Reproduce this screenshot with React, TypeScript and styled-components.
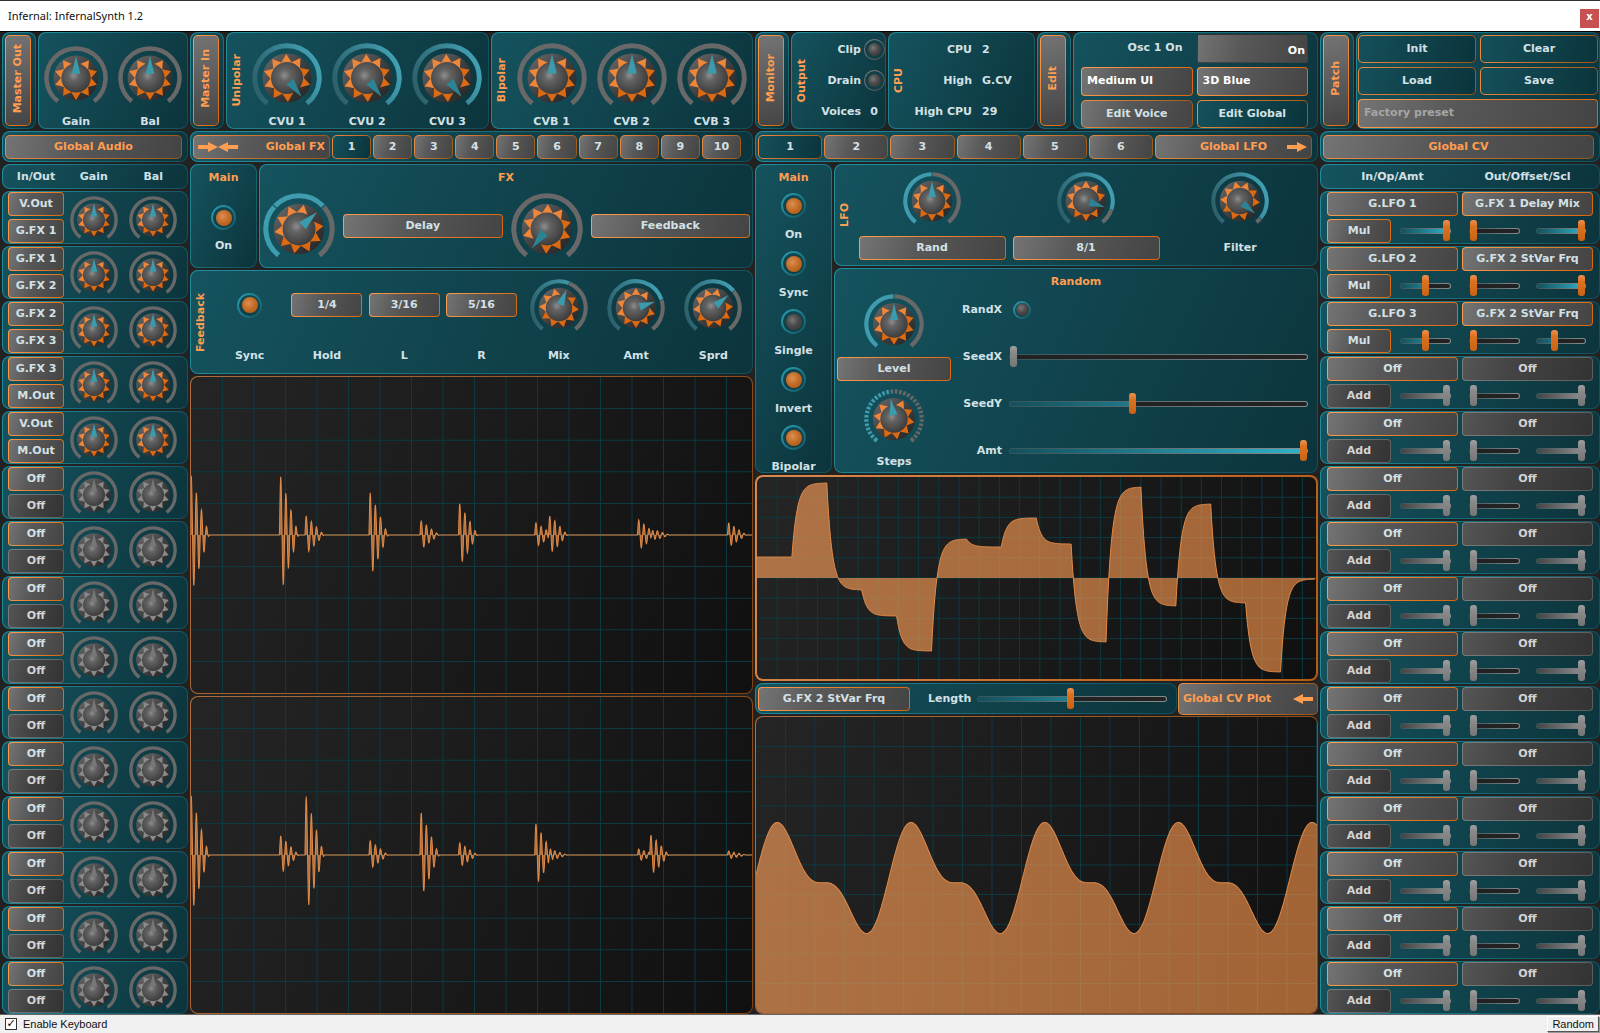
import React from "react";
import styled, { createGlobalStyle, css } from "styled-components";

const ORANGE = "#ff9d50";
const TEXT = "#d3e1e6";

const Global = createGlobalStyle`
  * { box-sizing: border-box; }
  body { margin: 0; background: #222; }
  button, select, input { font: inherit; color: inherit; margin: 0; }
  button, select { cursor: pointer; }
`;

/* Surfaces: the fill and the gradient outline are both painted as backgrounds */

const outlined = (fill: string, line: string, width = 1) => css`
  border: ${width}px solid transparent;
  background: ${fill} padding-box, ${line} border-box;
`;

const TEAL_FILL = "linear-gradient(115deg, #15535e, #0c343c)";
const TEAL_LINE = "linear-gradient(115deg, #1f8fa0, #114f5a)";
const GREY_FILL = "linear-gradient(105deg, #747474, #585858 40%, #444)";
const DIM_FILL = "linear-gradient(105deg, #555, #434343 40%, #333)";
const TAB_ON_FILL = "linear-gradient(105deg, #15505a, #0b343c)";
const ORANGE_LINE = "linear-gradient(115deg, #ff9c50, #d9660c)";
const TAB_LINE = "linear-gradient(115deg, #f08c40, #985416)";
const GREY_LINE = "linear-gradient(115deg, #7c7c7c, #5c5c5c)";

const App$ = styled.div`
  min-height: 100vh;
  display: flex;
  flex-direction: column;
  background: #222;
  color: ${TEXT};
  font: bold 11px/14px "DejaVu Sans", Verdana, sans-serif;
`;

const TitleBar = styled.header`
  height: 32px;
  flex: none;
  display: flex;
  align-items: center;
  justify-content: space-between;
  padding: 0 1px 0 8px;
  background: #fff;
  color: #111;
  border-top: 1px solid #333;
  border-bottom: 1px solid #000;
  font: 11px/16px "Noto Sans", "Open Sans", sans-serif;
`;

const TitleText = styled.h1`
  margin: 0;
  font: inherit;
`;

const CloseButton = styled.button`
  width: 19px;
  height: 19px;
  margin-top: 4px;
  padding: 0 0 2px;
  border: 0;
  background: #c75050;
  color: #fff;
  font: bold 10px/16px "DejaVu Sans", sans-serif;
`;

const Rack = styled.main`
  flex: 1;
  display: grid;
  grid-template-columns: minmax(0, 186fr) minmax(0, 563fr) minmax(0, 563fr) minmax(0, 280fr);
  gap: 2px;
  padding-left: 2px;
`;

const Column = styled.div`
  display: flex;
  flex-direction: column;
  gap: 2px;
`;

const Footer = styled.footer`
  height: 19px;
  flex: none;
  display: flex;
  align-items: center;
  justify-content: space-between;
  padding: 0 1px 0 5px;
  border-top: 1px solid #666;
  background: #f0f0f0;
  color: #111;
  font: 11px/14px "Liberation Sans", Arial, sans-serif;
`;

const KeyboardLabel = styled.label`
  display: flex;
  align-items: center;
  gap: 6px;
`;

const KeyboardBox = styled.input`
  appearance: none;
  width: 12px;
  height: 12px;
  border: 1px solid #333;
  background: #fff;
  display: grid;
  place-items: center;
  &:checked::after {
    content: "✓";
    color: #000;
    font: bold 11px/10px "DejaVu Sans", sans-serif;
  }
`;

const ClassicButton = styled.button`
  height: 16px;
  padding: 0 4px;
  border: 1px solid;
  border-color: #fff #555 #555 #fff;
  box-shadow: 1px 1px 0 #999;
  background: #f0f0f0;
  line-height: 13px;
`;

const Panel = styled.section<{ $dir?: "row" | "column"; $grow?: number; $width?: number; $height?: number }>`
  display: flex;
  flex-direction: ${(p) => p.$dir ?? "column"};
  ${(p) => p.$grow && `flex: ${p.$grow} 1 0;`}
  ${(p) => p.$width && `flex: none; width: ${p.$width}px;`}
  ${(p) => p.$height && `height: ${p.$height}px;`}
  min-width: 0;
  border-radius: 8px;
  ${outlined(TEAL_FILL, TEAL_LINE)}
`;

const TopRow = styled.div`
  display: flex;
  gap: 2px;
  height: 97px;
`;

const Split = styled.div<{ $height: number }>`
  display: flex;
  gap: 2px;
  height: ${(p) => p.$height}px;
`;

const Stack = styled.div`
  flex: 1;
  min-width: 0;
  display: flex;
  flex-direction: column;
  gap: 2px;
`;

const BarPanel = styled(Panel)`
  flex-direction: row;
  align-items: center;
  gap: 2px;
  height: 31px;
  padding: 0 5px 0 2px;
`;

const FxBar = styled(BarPanel)`
  padding-right: 11px;
`;

const SideFrame = styled(Panel)`
  flex: none;
  width: 34px;
  padding: 2px 4px 2px 2px;
`;

const SideButton = styled.button`
  flex: 1;
  width: 100%;
  padding: 0;
  border-radius: 5px;
  color: ${ORANGE};
  ${outlined("linear-gradient(165deg, #747474, #444)", ORANGE_LINE)}
`;

const Upright = styled.span`
  display: inline-block;
  writing-mode: vertical-rl;
  transform: rotate(180deg);
  white-space: nowrap;
`;

const UprightTitle = styled.h2`
  flex: none;
  width: 20px;
  margin: 0;
  display: grid;
  place-items: center;
  color: ${ORANGE};
  font: inherit;
`;

const Title = styled.h2`
  margin: 0;
  padding-top: 6px;
  text-align: center;
  color: ${ORANGE};
  font: inherit;
`;

type Tone = "on" | "dim";

const control = css<{ $tone?: Tone; $w?: number }>`
  height: 24px;
  padding: 0;
  border-radius: 4px;
  white-space: nowrap;
  ${(p) => (p.$w ? `width: ${p.$w}px;` : "width: 100%;")}
  ${(p) =>
    p.$tone === "dim" ? outlined(DIM_FILL, GREY_LINE) : outlined(GREY_FILL, ORANGE_LINE)}
  ${(p) => p.$tone === "dim" && "color: #d4d4d4;"}
`;

const Select$ = styled.select<{ $tone?: Tone; $w?: number }>`
  appearance: none;
  min-width: 0;
  text-align: center;
  text-align-last: center;
  ${control}
`;

const EditSelect = styled(Select$)`
  height: 29px;
  padding: 0 5px;
  color: #fff;
  text-align: left;
  text-align-last: left;
`;

const PresetSelect = styled(EditSelect)`
  grid-column: 1 / -1;
  color: #a6a6a6;
`;

const EditField = styled.input`
  width: 100%;
  min-width: 0;
  height: 29px;
  padding: 4px 2px 0;
  color: #fff;
  text-align: right;
  border-radius: 2px;
  ${outlined(GREY_FILL, "linear-gradient(#333, #444)")}
`;

const Tab = styled.button<{ $active?: boolean }>`
  flex: 1;
  min-width: 0;
  height: 24px;
  padding: 0;
  border-radius: 5px;
  ${(p) => outlined(p.$active ? TAB_ON_FILL : GREY_FILL, TAB_LINE)}
`;

const SectionButton = styled.button<{ $w?: number }>`
  ${(p) => (p.$w ? `flex: none; width: ${p.$w}px;` : "flex: 1;")}
  height: 24px;
  display: flex;
  align-items: center;
  justify-content: ${(p) => (p.$w ? "space-between" : "center")};
  padding: 0 4px;
  border-radius: 5px;
  color: ${ORANGE};
  white-space: nowrap;
  ${outlined(GREY_FILL, TAB_LINE)}
`;

const LfoButton = styled(SectionButton)`
  justify-content: flex-end;
  gap: 20px;
`;

const PlotButton = styled(SectionButton)`
  height: 32px;
`;

const ActionButton = styled.button<{ $grey?: boolean }>`
  width: 100%;
  min-width: 0;
  height: 28px;
  padding: 0;
  border-radius: 5px;
  ${(p) => outlined(p.$grey ? GREY_FILL : TAB_ON_FILL, TAB_LINE)}
`;

const ActionGrid = styled.div<{ $pad: string }>`
  flex: 1;
  display: grid;
  grid-template-columns: 1fr 1fr;
  gap: 4px;
  align-content: center;
  align-items: center;
  padding: ${(p) => p.$pad};
`;

const RightLabel = styled.label`
  padding-right: 10px;
  text-align: right;
  white-space: nowrap;
`;

/* Knobs */

const KnobBox = styled.span<{ $size: number }>`
  position: relative;
  display: block;
  flex: none;
  width: ${(p) => p.$size}px;
  svg { display: block; width: 100%; }
  input {
    position: absolute;
    inset: 0;
    width: 100%;
    height: 100%;
    opacity: 0;
  }
`;

const RING_END = 142;
const polar = (r: number, deg: number) => {
  const a = (deg * Math.PI) / 180;
  return `${(r * Math.sin(a)).toFixed(2)} ${(-r * Math.cos(a)).toFixed(2)}`;
};
const arc = (from: number, to: number) =>
  `M${polar(29.5, from)} A29.5 29.5 0 ${to - from > 180 ? 1 : 0} 1 ${polar(29.5, to)}`;

const TEETH = [36, 72, 108, 144, 180, 216, 252, 288, 324];

type KnobProps = {
  size: number;
  angle?: number;
  fill?: boolean;
  parts?: number;
  off?: boolean;
  name: string;
};

function Knob({ size, angle = 0, fill, parts, off, name }: KnobProps) {
  const ring: { d: string; stroke: string }[] = [];
  if (parts) {
    const step = (RING_END * 2) / parts;
    const gap = parts > 4 ? step * 0.2 : 1;
    for (let i = 0; i < parts; i++) {
      const from = -RING_END + i * step;
      ring.push({
        d: arc(from + (i ? gap : 0), from + step - (i < parts - 1 ? gap : 0)),
        stroke: from + step <= angle + 1 ? "#3f9cae" : "#686868",
      });
    }
  } else if (fill) {
    ring.push({ d: arc(-RING_END, angle), stroke: "url(#ringFill)" });
    if (angle < RING_END) ring.push({ d: arc(angle + 1, RING_END), stroke: "#686868" });
  } else {
    ring.push({ d: arc(-RING_END, RING_END), stroke: "#686868" });
  }
  const turn = `rotate(${angle})`;
  return (
    <KnobBox $size={size}>
      <svg viewBox="-32 -32 64 58" aria-hidden="true">
        {ring.map((s, i) => (
          <path key={i} d={s.d} fill="none" stroke={s.stroke} strokeWidth="4.5" />
        ))}
        <circle r="22.4" fill="url(#knobRim)" />
        <g transform={turn}>
          {TEETH.map((t) => (
            <path
              key={t}
              transform={`rotate(${t})`}
              d="M0 -22 L5 -13.8 L-5 -13.8 Z"
              fill={off ? "#8a8a8a" : Math.cos(((t + angle + 40) * Math.PI) / 180) > 0.2 ? "#ee873a" : "#dc6a12"}
            />
          ))}
        </g>
        <circle r="14.6" fill="url(#knobCap)" />
        <path
          transform={turn}
          d="M0 -22 L4.3 -4.2 L-4.3 -4.2 Z"
          fill={off ? "#777" : Math.abs(angle) < 100 ? "#3a9bad" : "#2b8394"}
        />
      </svg>
      <input type="range" min={-RING_END} max={RING_END} defaultValue={angle} disabled={off} aria-label={name} />
    </KnobBox>
  );
}

const SharedPaints = styled.svg`
  position: absolute;
  width: 0;
  height: 0;
`;

function Paints() {
  return (
    <SharedPaints aria-hidden="true">
      <defs>
        <linearGradient id="ringFill" gradientUnits="userSpaceOnUse" x1="-30" y1="20" x2="30" y2="-4">
          <stop offset="0" stopColor="#2c5c66" />
          <stop offset="0.5" stopColor="#357c8a" />
          <stop offset="1" stopColor="#419eb1" />
        </linearGradient>
        <linearGradient id="knobRim" x1="0" y1="0" x2="1" y2="1">
          <stop offset="0" stopColor="#6c6c6c" />
          <stop offset="0.5" stopColor="#404040" />
          <stop offset="1" stopColor="#222" />
        </linearGradient>
        <radialGradient id="knobCap" cx="0.42" cy="0.42" r="0.6">
          <stop offset="0" stopColor="#8e8e8e" />
          <stop offset="0.3" stopColor="#636363" />
          <stop offset="1" stopColor="#3c3c3c" />
        </radialGradient>
        <linearGradient id="wave" x1="0" y1="0" x2="1" y2="0">
          <stop offset="0" stopColor="#f79c58" />
          <stop offset="1" stopColor="#f09048" />
        </linearGradient>
      </defs>
    </SharedPaints>
  );
}

/* Toggle lamps */

const Led = styled.input<{ $size?: number; $grey?: boolean }>`
  appearance: none;
  flex: none;
  display: grid;
  place-items: center;
  width: ${(p) => p.$size ?? 25}px;
  height: ${(p) => p.$size ?? 25}px;
  border-radius: 50%;
  ${(p) =>
    p.$grey
      ? outlined("linear-gradient(#113f48, #113f48)", "linear-gradient(135deg, #868686, #4c4c4c)", 1)
      : outlined("linear-gradient(#114650, #113f48)", "linear-gradient(135deg, #28a2b6, #14535e)", 2)}
  &::before {
    content: "";
    width: ${(p) => (p.$size ? 13 : 16)}px;
    height: ${(p) => (p.$size ? 13 : 16)}px;
    border-radius: 50%;
    background: radial-gradient(circle at 40% 38%, #787878, #484848 45%, #343434);
  }
  &:checked::before {
    background: radial-gradient(circle at 40% 38%, #dc8e52, #c06a24 50%, #a65310);
  }
`;

/* Sliders */

const SliderInput = styled.input<{ $off?: boolean; $fill: number }>`
  appearance: none;
  flex: 1;
  min-width: 0;
  height: 21px;
  background: transparent;
  &::-webkit-slider-runnable-track {
    height: 6px;
    border-radius: 3px;
    border: 1px solid transparent;
    background:
      linear-gradient(90deg, transparent ${(p) => p.$fill}%, #222 ${(p) => p.$fill}%) padding-box,
      linear-gradient(90deg, ${(p) => (p.$off ? "#444, #929292" : "#14505b, #2fb3cb")}) padding-box,
      linear-gradient(90deg, #35555c, #8c8c8c) border-box;
  }
  &::-webkit-slider-thumb {
    appearance: none;
    width: 7px;
    height: 21px;
    margin-top: -9px;
    border-radius: 3px;
    background: ${(p) =>
      p.$off ? "linear-gradient(#a0a0a0, #8a8a8a 30%, #767676)" : "linear-gradient(#ec9250, #dc7220 30%, #c86212)"};
  }
`;

function Slider({ value, off, name, id }: { value: number; off?: boolean; name?: string; id?: string }) {
  return (
    <SliderInput
      id={id}
      type="range"
      min={0}
      max={100}
      defaultValue={value}
      $fill={value}
      $off={off}
      aria-label={name}
    />
  );
}

function Choice({ value, name, tone, w }: { value: string; name?: string; tone?: Tone; w?: number }) {
  return (
    <Select$ $tone={tone} $w={w} aria-label={name} defaultValue={value}>
      <option>{value}</option>
    </Select$>
  );
}

function Side({ children }: { children: string }) {
  return (
    <SideFrame>
      <SideButton type="button">
        <Upright>{children}</Upright>
      </SideButton>
    </SideFrame>
  );
}

function VTitle({ children }: { children: string }) {
  return (
    <UprightTitle>
      <Upright>{children}</Upright>
    </UprightTitle>
  );
}

function Arrow({ left }: { left?: boolean }) {
  return (
    <svg width="20" height="12" viewBox="0 0 20 12" aria-hidden="true">
      <path
        transform={left ? "matrix(-1 0 0 1 20 0)" : undefined}
        d="M0 4 H10 V1 L20 6 L10 11 V8 H0 Z"
        fill={ORANGE}
      />
    </svg>
  );
}

const ArrowPair = styled.span`
  display: flex;
`;

/* Knob and control cells, each with its caption below */

const Cells = styled.div<{ $n: number }>`
  flex: 1;
  min-width: 0;
  display: grid;
  grid-template-columns: repeat(${(p) => p.$n}, minmax(0, 1fr));
`;

const TopCell = styled.label`
  display: grid;
  grid-template-rows: 1fr 12px;
  place-items: center;
`;

const Cell = styled.label`
  display: grid;
  grid-template-rows: 2fr 1fr;
  place-items: center;
`;

const CellBox = styled(Cell).attrs({ as: "div" })``;

const MainLamp = styled.label`
  display: flex;
  flex-direction: column;
  align-items: center;
  gap: 9px;
  margin-top: 20px;
`;

const LampList = styled.div`
  display: flex;
  flex-direction: column;
  padding-top: 6px;
`;

const LampItem = styled.label`
  height: 58px;
  display: grid;
  grid-template-rows: 1fr 1fr;
  place-items: center;
`;

const FxRow = styled.div`
  flex: 1;
  display: flex;
  align-items: center;
  gap: 8px;
  padding: 0 2px 0 3px;
`;

const Readouts = styled.dl<{ $gap: number; $value: number }>`
  flex: 1;
  margin: 0;
  padding-top: 1px;
  display: grid;
  grid-template-columns: 1fr ${(p) => p.$value}px;
  grid-auto-rows: 1fr;
  align-items: center;
  column-gap: ${(p) => p.$gap}px;
  dt { text-align: right; white-space: nowrap; }
  dd { margin: 0; }
`;

const LampValue = styled.dd`
  display: grid;
  place-items: center;
`;

/* Routing rows */

const AudioHeader = styled(Panel)`
  display: grid;
  grid-template-columns: 56px 1fr 1fr;
  align-items: center;
  justify-items: center;
  height: 25px;
  padding: 0 4px 0 5px;
`;

const AudioRow = styled(Panel)`
  display: grid;
  grid-template-columns: 56px 1fr 1fr;
  align-items: center;
  justify-items: center;
  height: 53px;
  padding: 0 4px 0 5px;
`;

const Pair = styled.div`
  display: flex;
  flex-direction: column;
  gap: 3px;
  width: 100%;
`;

const CvHeader = styled(Panel)`
  display: grid;
  grid-template-columns: 1fr 1fr;
  align-items: center;
  justify-items: center;
  gap: 4px;
  height: 25px;
  padding: 0 6px;
`;

const CvRow = styled(Panel)`
  display: grid;
  grid-template-columns: minmax(0, 1fr) minmax(0, 1fr);
  gap: 3px 4px;
  height: 53px;
  padding: 0 6px;
`;

const OpSlot = styled.div`
  display: flex;
  align-items: center;
  gap: 9px;
  padding-right: 7px;
  select { flex: none; }
`;

const SliderPair = styled.div`
  display: flex;
  align-items: center;
  gap: 16px;
  padding: 0 7px;
`;

/* Random generator */

const RandomBody = styled.div`
  flex: 1;
  display: grid;
  grid-template-columns: 114px 1fr;
  margin-top: -3px;
  padding: 0 9px 0 2px;
`;

const RandomKnobs = styled.div`
  display: flex;
  flex-direction: column;
  align-items: center;
  justify-content: flex-end;
  gap: 8px;
  padding-bottom: 3px;
`;

const StepsCell = styled.label`
  display: flex;
  flex-direction: column;
  align-items: center;
  gap: 12px;
`;

const RandomRows = styled.div`
  display: grid;
  grid-template-columns: 51px 1fr;
  grid-auto-rows: 47px;
  align-items: center;
  column-gap: 7px;
  height: 186px;
  label { text-align: right; }
  > input { width: 100%; }
  > input[type="checkbox"] { width: 18px; margin-left: 4px; }
`;

const PlotToolbar = styled(Panel)`
  flex-direction: row;
  align-items: center;
  flex: 1;
  padding: 0 9px 0 2px;
`;

const LengthLabel = styled.label`
  margin: 0 6px 0 18px;
`;

const ToolRow = styled.div`
  display: flex;
  align-items: center;
  gap: 1px;
  height: 31px;
  > section { height: 31px; }
`;

/* Plots */

const PlotFrame = styled.figure<{ $height?: number; $bright?: boolean }>`
  margin: 0;
  ${(p) => (p.$height ? `height: ${p.$height}px;` : "flex: 1 1 0; min-height: 0;")}
  display: flex;
  overflow: hidden;
  border-radius: 8px;
  ${(p) =>
    outlined(
      "linear-gradient(115deg, #252525, #101010)",
      p.$bright ? "linear-gradient(115deg, #d98a50, #b45a12)" : "linear-gradient(115deg, #b06e40, #84430e)",
      p.$bright ? 2 : 1
    )}
  svg { display: block; width: 100%; height: 0; min-height: 100%; }
`;

type PlotProps = {
  w: number;
  h: number;
  line: string;
  base: number;
  height?: number;
  bright?: boolean;
  name: string;
};

function Plot({ w, h, line, base, height, bright, name }: PlotProps) {
  const pitch = h / 10;
  const cols = Array.from({ length: Math.floor(w / pitch) }, (_, i) => (i + 1) * pitch);
  const rows = Array.from({ length: 9 }, (_, i) => (i + 1) * pitch);
  return (
    <PlotFrame $height={height} $bright={bright}>
      <svg viewBox={`0 0 ${w} ${h}`} preserveAspectRatio="none" role="img" aria-label={name}>
        <g stroke="#0b3a42" strokeWidth="1">
          {cols.map((x) => (
            <line key={`c${x}`} x1={x} x2={x} y1="0" y2={h} />
          ))}
          {rows.map((y) => (
            <line key={`r${y}`} x1="0" x2={w} y1={y} y2={y} />
          ))}
        </g>
        <path d={`M0 ${base} L${line} L${w} ${base} Z`} fill="url(#wave)" fillOpacity="0.65" />
        <path d={`M${line}`} fill="none" stroke="#e08a48" strokeWidth="1" />
      </svg>
    </PlotFrame>
  );
}

type Burst = [start: number, amp: number];

const echoes = (bursts: Burst[]) => {
  const pts: string[] = [];
  for (let x = 0; x <= 561; x += 0.32) {
    let y = 0;
    for (const [s, a] of bursts) {
      const t = x - s;
      if (t > 0 && t < 19.2) y += (a / 0.93) * (1 - t / 19.2) * Math.sin((2 * Math.PI * t) / 5.13);
    }
    pts.push(`${x.toFixed(2)} ${(157.5 - y).toFixed(2)}`);
  }
  return pts.join(" L");
};

const LEFT_ECHOES: Burst[] = [
  [-1, 59], [88.5, 58], [114, 19], [178, 42], [229, 14], [267.5, 31],
  [343.7, 12], [357.4, 20], [446.5, 15], [460, 6], [536.5, 12],
];
const RIGHT_ECHOES: Burst[] = [
  [-1, 59], [88.5, 19], [114, 58], [178, 14], [229, 42], [267.5, 12],
  [343.7, 31], [357.4, 6], [446.5, 6], [458.8, 21], [536.5, 4],
];

const RANDOM_LEVELS = [80, 6, 113, 139, 174, 62, 70, 41, 67, 165, 10, 129, 27, 126, 195, 102];

const lfoLine = () => {
  const pts: string[] = [];
  let prev = RANDOM_LEVELS[0];
  RANDOM_LEVELS.forEach((level, i) => {
    for (let t = 0; t <= 34.9; t += 0.9) {
      const y = level + (prev - level) * Math.exp(-t / 5.2);
      pts.push(`${(i * 34.9 + t).toFixed(1)} ${y.toFixed(1)}`);
    }
    prev = level;
  });
  return pts.join(" L");
};

const cvLine = () => {
  const pts: string[] = [];
  for (let x = 0; x <= 561; x += 1) {
    const a = ((x + 2) / 133.7) * 2 * Math.PI;
    const y = 162 + 3.2 * Math.cos(2 * a) - 42.5 * (Math.sin(a) + 0.5 * Math.sin(2 * a));
    pts.push(`${x} ${y.toFixed(1)}`);
  }
  return pts.join(" L");
};

/* Data */

const ROW_COUNT = 15;
const AUDIO = [
  ["V.Out", "G.FX 1"],
  ["G.FX 1", "G.FX 2"],
  ["G.FX 2", "G.FX 3"],
  ["G.FX 3", "M.Out"],
  ["V.Out", "M.Out"],
];
const CV: { source: string; target: string; levels: number[] }[] = [
  { source: "G.LFO 1", target: "G.FX 1 Delay Mix", levels: [100, 0, 100] },
  { source: "G.LFO 2", target: "G.FX 2 StVar Frq", levels: [49, 0, 100] },
  { source: "G.LFO 3", target: "G.FX 2 StVar Frq", levels: [49, 0, 36] },
];
const rows = Array.from({ length: ROW_COUNT }, (_, i) => i);

function GlobalAudio() {
  return (
    <Column>
      <TopRow>
        <Side>Master Out</Side>
        <Panel $dir="row" $grow={1}>
          <Cells $n={2}>
            {["Gain", "Bal"].map((n) => (
              <TopCell key={n}>
                <Knob size={64} name={n} />
                {n}
              </TopCell>
            ))}
          </Cells>
        </Panel>
      </TopRow>
      <BarPanel>
        <SectionButton type="button">Global Audio</SectionButton>
      </BarPanel>
      <AudioHeader>
        <span>In/Out</span>
        <span>Gain</span>
        <span>Bal</span>
      </AudioHeader>
      {rows.map((i) => {
        const route = AUDIO[i];
        return (
          <AudioRow key={i}>
            <Pair>
              <Choice value={route ? route[0] : "Off"} name={`In ${i + 1}`} />
              <Choice value={route ? route[1] : "Off"} tone={route ? "on" : "dim"} name={`Out ${i + 1}`} />
            </Pair>
            <Knob size={48} off={!route} name={`Gain ${i + 1}`} />
            <Knob size={48} off={!route} name={`Bal ${i + 1}`} />
          </AudioRow>
        );
      })}
    </Column>
  );
}

function GlobalFx() {
  return (
    <Column>
      <TopRow>
        <Side>Master In</Side>
        <Panel $dir="row" $grow={1}>
          <VTitle>Unipolar</VTitle>
          <Cells $n={3}>
            {["CVU 1", "CVU 2", "CVU 3"].map((n) => (
              <TopCell key={n}>
                <Knob size={70} angle={142} fill name={n} />
                {n}
              </TopCell>
            ))}
          </Cells>
        </Panel>
        <Panel $dir="row" $grow={1}>
          <VTitle>Bipolar</VTitle>
          <Cells $n={3}>
            {["CVB 1", "CVB 2", "CVB 3"].map((n) => (
              <TopCell key={n}>
                <Knob size={70} name={n} />
                {n}
              </TopCell>
            ))}
          </Cells>
        </Panel>
      </TopRow>
      <FxBar>
        <SectionButton type="button" $w={137}>
          <ArrowPair>
            <Arrow />
            <Arrow left />
          </ArrowPair>
          Global FX
        </SectionButton>
        {rows.slice(0, 10).map((i) => (
          <Tab key={i} type="button" $active={i === 0}>
            {i + 1}
          </Tab>
        ))}
      </FxBar>
      <Split $height={104}>
        <Panel $width={67}>
          <Title>Main</Title>
          <MainLamp>
            <Led type="checkbox" defaultChecked />
            On
          </MainLamp>
        </Panel>
        <Panel $grow={1}>
          <Title>FX</Title>
          <FxRow>
            <Knob size={72} angle={47} parts={3} name="FX type" />
            <Choice value="Delay" name="FX type" />
            <Knob size={72} angle={-142} name="Delay type" />
            <Choice value="Feedback" name="Delay type" />
          </FxRow>
        </Panel>
      </Split>
      <Panel $dir="row" $height={104}>
        <VTitle>Feedback</VTitle>
        <Cells $n={7}>
          <Cell>
            <Led type="checkbox" defaultChecked />
            Sync
          </Cell>
          {[["Hold", "1/4"], ["L", "3/16"], ["R", "5/16"]].map(([n, v]) => (
            <Cell key={n}>
              <Choice value={v} w={71} />
              {n}
            </Cell>
          ))}
          <Cell>
            <Knob size={58} angle={22} fill name="Mix" />
            Mix
          </Cell>
          <Cell>
            <Knob size={58} angle={72} fill name="Amt" />
            Amt
          </Cell>
          <Cell>
            <Knob size={58} angle={50} fill name="Sprd" />
            Sprd
          </Cell>
        </Cells>
      </Panel>
      <Plot w={561} h={315} line={echoes(LEFT_ECHOES)} base={157.5} name="Left echoes" />
      <Plot w={561} h={315} line={echoes(RIGHT_ECHOES)} base={157.5} name="Right echoes" />
    </Column>
  );
}

function GlobalLfo() {
  return (
    <Column>
      <TopRow>
        <Side>Monitor</Side>
        <Panel $dir="row" $width={95}>
          <VTitle>Output</VTitle>
          <Readouts $gap={2} $value={22}>
            <dt><label htmlFor="clip">Clip</label></dt>
            <LampValue><Led id="clip" type="checkbox" $size={21} $grey /></LampValue>
            <dt><label htmlFor="drain">Drain</label></dt>
            <LampValue><Led id="drain" type="checkbox" $size={21} $grey /></LampValue>
            <dt>Voices</dt>
            <LampValue>0</LampValue>
          </Readouts>
        </Panel>
        <Panel $dir="row" $width={147}>
          <VTitle>CPU</VTitle>
          <Readouts $gap={10} $value={52}>
            <dt>CPU</dt><dd>2</dd>
            <dt>High</dt><dd>G.CV</dd>
            <dt>High CPU</dt><dd>29</dd>
          </Readouts>
        </Panel>
        <Side>Edit</Side>
        <Panel $grow={1}>
          <ActionGrid $pad="0 9px 0 7px">
            <RightLabel htmlFor="osc">Osc 1 On</RightLabel>
            <EditField id="osc" type="text" readOnly value="On" />
            <EditSelect aria-label="UI size"><option>Medium UI</option></EditSelect>
            <EditSelect aria-label="Theme"><option>3D Blue</option></EditSelect>
            <ActionButton type="button" $grey>Edit Voice</ActionButton>
            <ActionButton type="button">Edit Global</ActionButton>
          </ActionGrid>
        </Panel>
      </TopRow>
      <BarPanel>
        {rows.slice(0, 6).map((i) => (
          <Tab key={i} type="button" $active={i === 0}>
            {i + 1}
          </Tab>
        ))}
        <LfoButton type="button" $w={157}>
          Global LFO
          <Arrow />
        </LfoButton>
      </BarPanel>
      <Split $height={309}>
        <Panel $width={77}>
          <Title>Main</Title>
          <LampList>
            {["On", "Sync", "Single", "Invert", "Bipolar"].map((n) => (
              <LampItem key={n}>
                <Led type="checkbox" defaultChecked={n !== "Single"} />
                {n}
              </LampItem>
            ))}
          </LampList>
        </Panel>
        <Stack>
          <Panel $dir="row" $height={102}>
            <VTitle>LFO</VTitle>
            <Cells $n={3}>
              <CellBox>
                <Knob size={58} parts={2} name="LFO shape" />
                <Choice value="Rand" w={147} name="LFO shape" />
              </CellBox>
              <CellBox>
                <Knob size={58} angle={108} fill name="LFO rate" />
                <Choice value="8/1" w={147} name="LFO rate" />
              </CellBox>
              <Cell>
                <Knob size={58} angle={130} fill name="Filter" />
                Filter
              </Cell>
            </Cells>
          </Panel>
          <Panel $grow={1}>
            <Title>Random</Title>
            <RandomBody>
              <RandomKnobs>
                <Knob size={60} parts={2} name="Level" />
                <Choice value="Level" name="Random target" />
                <StepsCell>
                  <Knob size={60} angle={-9} parts={32} name="Steps" />
                  Steps
                </StepsCell>
              </RandomKnobs>
              <RandomRows>
                <label htmlFor="randx">RandX</label>
                <Led id="randx" type="checkbox" $size={18} />
                <label htmlFor="seedx">SeedX</label>
                <Slider id="seedx" value={0} off />
                <label htmlFor="seedy">SeedY</label>
                <Slider id="seedy" value={41} />
                <label htmlFor="amt">Amt</label>
                <Slider id="amt" value={100} />
              </RandomRows>
            </RandomBody>
          </Panel>
        </Stack>
      </Split>
      <Plot w={559} h={202} line={lfoLine()} base={101} height={206} bright name="LFO shape" />
      <ToolRow>
        <PlotToolbar>
          <Choice value="G.FX 2 StVar Frq" w={152} name="Plot source" />
          <LengthLabel htmlFor="length">Length</LengthLabel>
          <Slider id="length" value={49} />
        </PlotToolbar>
        <PlotButton type="button" $w={140}>
          Global CV Plot
          <Arrow left />
        </PlotButton>
      </ToolRow>
      <Plot w={561} h={295} line={cvLine()} base={295} name="Global CV" />
    </Column>
  );
}

function GlobalCv() {
  return (
    <Column>
      <TopRow>
        <Side>Patch</Side>
        <Panel $grow={1}>
          <ActionGrid $pad="1px 1px 0">
            <ActionButton type="button">Init</ActionButton>
            <ActionButton type="button">Clear</ActionButton>
            <ActionButton type="button">Load</ActionButton>
            <ActionButton type="button">Save</ActionButton>
            <PresetSelect aria-label="Factory preset"><option>Factory preset</option></PresetSelect>
          </ActionGrid>
        </Panel>
      </TopRow>
      <BarPanel>
        <SectionButton type="button">Global CV</SectionButton>
      </BarPanel>
      <CvHeader>
        <span>In/Op/Amt</span>
        <span>Out/Offset/Scl</span>
      </CvHeader>
      {rows.map((i) => {
        const route = CV[i];
        const off = !route;
        const tone = off ? "dim" : "on";
        const [amt, offset, scale] = route ? route.levels : [100, 0, 100];
        return (
          <CvRow key={i}>
            <Choice value={route ? route.source : "Off"} name={`CV in ${i + 1}`} />
            <Choice value={route ? route.target : "Off"} tone={tone} name={`CV out ${i + 1}`} />
            <OpSlot>
              <Choice value={route ? "Mul" : "Add"} tone={tone} w={64} name={`Op ${i + 1}`} />
              <Slider value={amt} off={off} name={`Amount ${i + 1}`} />
            </OpSlot>
            <SliderPair>
              <Slider value={offset} off={off} name={`Offset ${i + 1}`} />
              <Slider value={scale} off={off} name={`Scale ${i + 1}`} />
            </SliderPair>
          </CvRow>
        );
      })}
    </Column>
  );
}

export default function App() {
  return (
    <App$>
      <Global />
      <Paints />
      <TitleBar>
        <TitleText>Infernal: InfernalSynth 1.2</TitleText>
        <CloseButton type="button" aria-label="Close">x</CloseButton>
      </TitleBar>
      <Rack>
        <GlobalAudio />
        <GlobalFx />
        <GlobalLfo />
        <GlobalCv />
      </Rack>
      <Footer>
        <KeyboardLabel>
          <KeyboardBox type="checkbox" defaultChecked />
          Enable Keyboard
        </KeyboardLabel>
        <ClassicButton type="button">Random</ClassicButton>
      </Footer>
    </App$>
  );
}
